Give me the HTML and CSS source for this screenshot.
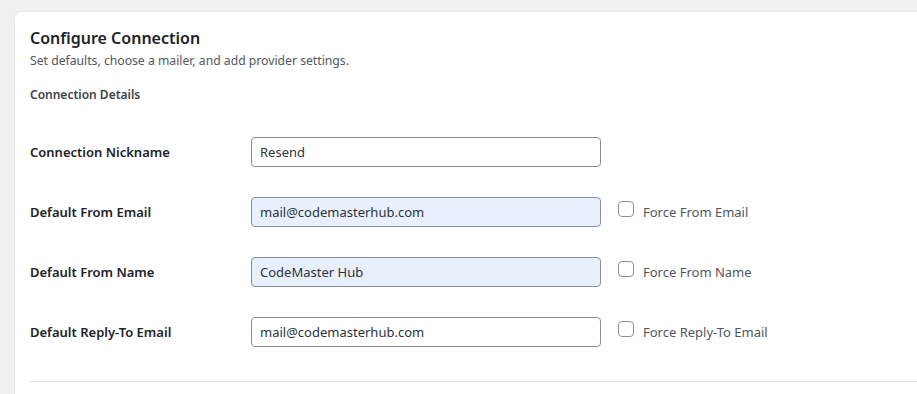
FILE: index.html
```html
<!DOCTYPE html>
<html lang="en">
<head>
    <meta charset="UTF-8">
    <title>Configure Connection</title>
    <link rel="stylesheet" href="styles.css">
</head>
<body>
    <div class="card">
        <h2 class="card-title">Configure Connection</h2>
        <p class="card-desc">Set defaults, choose a mailer, and add provider settings.</p>
        <h3 class="section-title">Connection Details</h3>

        <div class="form-rows">
            <div class="form-row">
                <label class="field-label">Connection Nickname</label>
                <input type="text" class="field-input" value="Resend">
                <span></span>
            </div>
            <div class="form-row">
                <label class="field-label">Default From Email</label>
                <input type="text" class="field-input filled" value="mail@codemasterhub.com">
                <label class="force"><span class="check"></span>Force From Email</label>
            </div>
            <div class="form-row">
                <label class="field-label">Default From Name</label>
                <input type="text" class="field-input filled" value="CodeMaster Hub">
                <label class="force"><span class="check"></span>Force From Name</label>
            </div>
            <div class="form-row">
                <label class="field-label">Default Reply-To Email</label>
                <input type="text" class="field-input" value="mail@codemasterhub.com">
                <label class="force"><span class="check"></span>Force Reply-To Email</label>
            </div>
        </div>

        <hr class="divider">
    </div>
</body>
</html>
```

FILE: styles.css
```css
body {
    margin: 0;
    height: 394px;
    background: #f0f0f1;
    font-family: "Noto Sans", "Open Sans", sans-serif;
    color: #1d2327;
    overflow: hidden;
}
.card {
    margin: 11px 0 0 14px;
    background: #fff;
    border: 1px solid #e6e6e8;
    border-right: none;
    border-bottom: none;
    border-radius: 8px 0 0 0;
    padding: 14px 0 0 15px;
    height: 380px;
}
.card-title {
    margin: 0;
    font-size: 16px;
    line-height: 24px;
    font-weight: 600;
}
.card-desc {
    margin: 0;
    font-size: 12.2px;
    line-height: 22px;
    color: #50575e;
}
.section-title {
    margin: 14px 0 0;
    font-size: 12px;
    line-height: 18px;
    font-weight: 600;
    color: #3c434a;
}
.form-rows {
    margin-top: 18px;
}
.form-row {
    display: grid;
    grid-template-columns: 221px 350px auto;
    align-items: center;
    height: 60px;
}
.field-label {
    font-size: 13px;
    font-weight: 600;
    color: #1d2327;
}
.field-input {
    box-sizing: border-box;
    width: 350px;
    height: 30px;
    padding: 0 8px;
    border: 1px solid #8c8f94;
    border-radius: 4px;
    font-family: inherit;
    font-size: 13px;
    color: #2c3338;
    background: #fff;
    outline: none;
}
.field-input.filled {
    background: #e8f0fe;
}
.force {
    display: flex;
    align-items: center;
    margin-left: 17px;
    font-size: 13px;
    color: #50575e;
}
.check {
    width: 14px;
    height: 14px;
    border: 1px solid #8c8f94;
    border-radius: 4px;
    margin: -6px 9px 0 0;
}
.divider {
    border: none;
    border-top: 1px solid #e2e4e7;
    margin: 19px 0 0;
}
```
